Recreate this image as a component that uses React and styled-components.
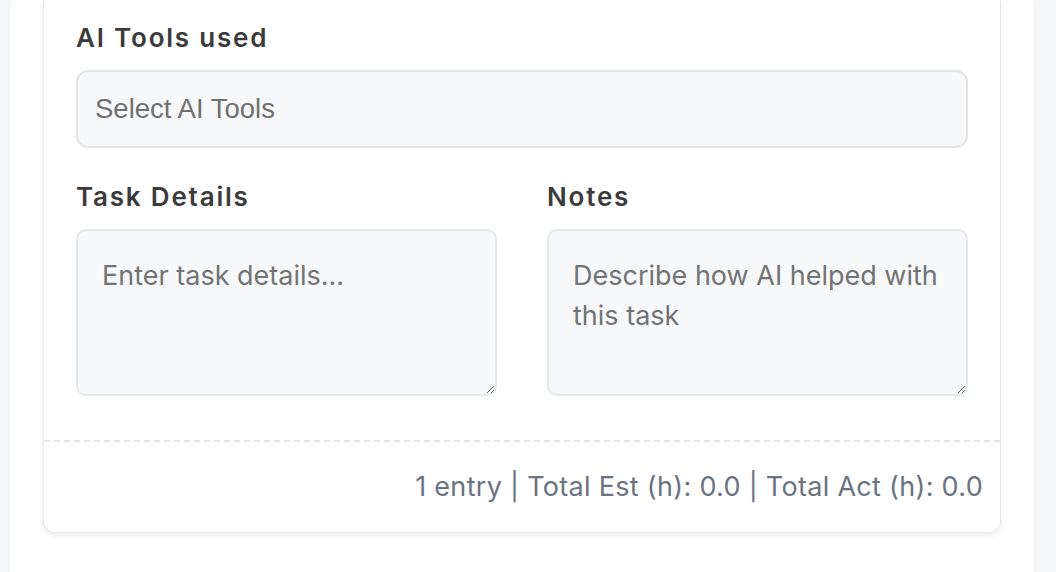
import React from 'react';
import styled, { createGlobalStyle } from 'styled-components';

const GlobalStyle = createGlobalStyle`
  html, body {
    margin: 0;
    padding: 0;
    background: #f6f7f9;
  }
  body {
    font-family: Inter, "Liberation Sans", sans-serif;
  }
`;

const Page = styled.div`
  display: flex;
  padding: 0 22px 0 10px;
  min-height: 572px;
  box-sizing: border-box;
`;

const Panel = styled.main`
  flex: 1;
  background: #fff;
  box-shadow: -1px 0 2px rgba(0, 0, 0, 0.04), 1px 0 2px rgba(0, 0, 0, 0.04);
  padding: 0 33px 40px;
`;

const Card = styled.section`
  background: #fff;
  border: 1.5px solid #e3e6ec;
  border-top: none;
  border-radius: 0 0 12px 12px;
  box-shadow: 0 3px 6px rgba(30, 40, 60, 0.08);
`;

const Body = styled.div`
  display: flex;
  flex-direction: column;
  gap: 33px;
  padding: 22px 32px 44px;
`;

const Row = styled.div`
  display: grid;
  grid-template-columns: 1fr 1fr;
  gap: 50px;
`;

const Field = styled.div`
  display: flex;
  flex-direction: column;
  gap: 16px;
`;

const Label = styled.label`
  font-family: Inter, "Liberation Sans", sans-serif;
  font-size: 26px;
  line-height: 32px;
  font-weight: 600;
  letter-spacing: 1.8px;
  color: #3b3b3b;
`;

const Select = styled.div`
  height: 78px;
  box-sizing: border-box;
  display: flex;
  align-items: center;
  padding: 0 17px;
  background: #f7f8fa;
  border: 2px solid #e4e4e4;
  border-radius: 12px;
  font-family: "Liberation Sans", Arial, sans-serif;
  font-size: 27.5px;
  color: #707070;
`;

const TextArea = styled.textarea`
  height: 167px;
  box-sizing: border-box;
  width: 100%;
  padding: 25px 24px;
  background: #f7f8fa;
  border: 2px solid #e3e7ee;
  border-radius: 10px;
  font-family: Inter, "Liberation Sans", sans-serif;
  font-size: 27px;
  line-height: 40px;
  color: #333;
  resize: vertical;
  outline: none;

  &::placeholder {
    color: #737373;
  }
`;

const Footer = styled.footer`
  border-top: 2px dashed #e1e4ea;
  padding: 31px 17px 31px;
  text-align: right;
  font-family: Inter, "Liberation Sans", sans-serif;
  font-size: 27px;
  line-height: 28px;
  letter-spacing: 0.3px;
  color: #6b7280;
`;

export default function App() {
  return (
    <>
      <GlobalStyle />
      <Page>
        <Panel>
          <Card>
            <Body>
              <Field>
                <Label>AI Tools used</Label>
                <Select>Select AI Tools</Select>
              </Field>
              <Row>
                <Field>
                  <Label>Task Details</Label>
                  <TextArea placeholder="Enter task details..." />
                </Field>
                <Field>
                  <Label>Notes</Label>
                  <TextArea placeholder="Describe how AI helped with this task" />
                </Field>
              </Row>
            </Body>
            <Footer>1 entry | Total Est (h): 0.0 | Total Act (h): 0.0</Footer>
          </Card>
        </Panel>
      </Page>
    </>
  );
}
